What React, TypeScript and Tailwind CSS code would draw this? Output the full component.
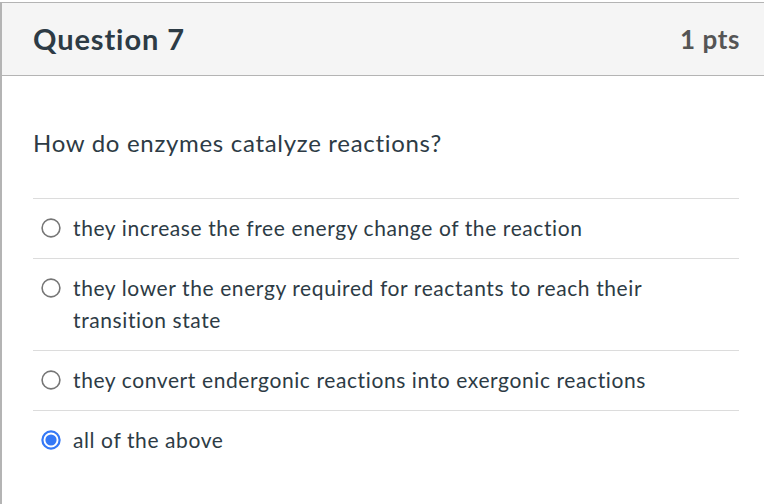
import React from "react";

const options = [
  { text: "they increase the free energy change of the reaction", checked: false },
  { text: "they lower the energy required for reactants to reach their transition state", checked: false },
  { text: "they convert endergonic reactions into exergonic reactions", checked: false },
  { text: "all of the above", checked: true },
];

function Radio({ checked }: { checked: boolean }) {
  return checked ? (
    <svg width="20" height="20" viewBox="0 0 20 20" className="shrink-0">
      <circle cx="10" cy="10" r="8.6" fill="white" stroke="#3478f6" strokeWidth="2.2" />
      <circle cx="10" cy="10" r="5.6" fill="#3478f6" />
    </svg>
  ) : (
    <svg width="20" height="20" viewBox="0 0 20 20" className="shrink-0">
      <circle cx="10" cy="10" r="8.9" fill="white" stroke="#767676" strokeWidth="1.6" />
    </svg>
  );
}

export default function App() {
  return (
    <div className="w-[764px] h-[504px] bg-white pt-[2px] overflow-hidden" style={{ fontFamily: "Lato, 'Noto Sans', sans-serif" }}>
      <div className="w-[800px] h-[560px] border-l-2 border-t border-[#b4b4b4] text-[#2d3b45]">
        <div className="h-[73px] bg-[#f5f5f5] border-b border-[#b4b4b4] flex items-center justify-between pl-[31px] pr-[62px] w-[800px]">
          <h2 className="text-[29px] font-bold leading-none tracking-[0.9px] pb-[1px]">Question 7</h2>
          <span className="text-[26px] font-bold leading-none tracking-[0.6px] text-[#555555] pb-[1px]">1 pts</span>
        </div>
        <div className="w-[706px] ml-[31px] pt-[51px]">
          <p className="text-[24px] leading-[32px] tracking-[0.7px]">How do enzymes catalyze reactions?</p>
          <div className="mt-[39px]">
            {options.map((o, i) => (
              <div key={i} className="border-t border-[#dcdcdc] flex items-start gap-[12px] pl-[8px] pr-[60px] pt-[13px] pb-[14px]">
                <div className="h-[32px] flex items-center">
                  <Radio checked={o.checked} />
                </div>
                <span className="text-[21px] leading-[32px] tracking-[0.6px]">{o.text}</span>
              </div>
            ))}
          </div>
        </div>
      </div>
    </div>
  );
}
